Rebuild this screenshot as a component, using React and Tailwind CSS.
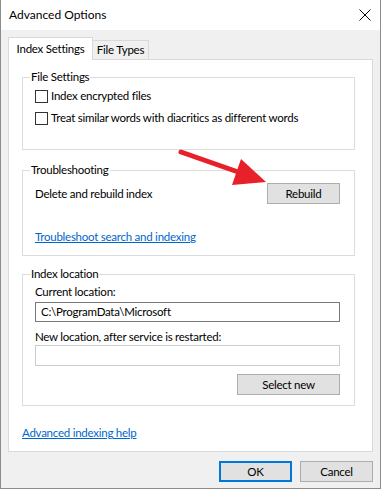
import React from "react";

const font = { fontFamily: 'Lato, "Noto Sans", sans-serif' };

function Btn({ children, className = "" }) {
  return (
    <div
      className={`flex h-[21px] items-center justify-center border border-[#adadad] bg-[#e1e1e1] text-black ${className}`}
    >
      {children}
    </div>
  );
}

function Check({ label }) {
  return (
    <div className="flex h-[22px] items-center">
      <div className="h-[13px] w-[13px] shrink-0 border border-[#333333] bg-white" />
      <span className="ml-[3px] whitespace-nowrap">{label}</span>
    </div>
  );
}

function Group({ title, className = "", children }) {
  return (
    <fieldset className={`border border-[#dcdcdc] pl-[7px] pr-[14px] ${className}`}>
      <legend className="px-[1px] leading-[16px]">{title}</legend>
      <div className="pl-[5px]">{children}</div>
    </fieldset>
  );
}

export default function App() {
  return (
    <div
      className="relative h-[489px] w-[381px] overflow-hidden border-b border-l border-r border-[#8c8c8c] bg-[#f0f0f0] text-[11.5px] leading-[16px] tracking-[-0.25px] text-black"
      style={font}
    >
      {/* Title bar */}
      <div className="flex h-[30px] items-center justify-between bg-white pl-[8px] pr-[8px]">
        <span className="text-[12px] tracking-normal">Advanced Options</span>
        <svg width="12" height="12" viewBox="0 0 12 12" className="mr-[1px]">
          <path d="M0.5 0.5 L11.5 11.5 M11.5 0.5 L0.5 11.5" stroke="#000" strokeWidth="1" />
        </svg>
      </div>

      {/* Tabs */}
      <div className="flex items-end pl-[7px] pt-[7px]">
        <div className="relative z-10 -mb-[1px] flex h-[23px] w-[85px] items-center justify-center border border-b-0 border-[#d9d9d9] bg-white">
          Index Settings
        </div>
        <div className="flex h-[19px] w-[56px] items-center justify-center border border-b-0 border-l-0 border-[#d9d9d9] bg-[#f0f0f0]">
          File Types
        </div>
      </div>

      {/* Panel */}
      <div className="mx-[7px] flex h-[393px] flex-col border border-[#d9d9d9] bg-white pl-[13px] pr-[17px]">
        <Group title="File Settings" className="mt-[9px] h-[81px]">
          <Check label="Index encrypted files" />
          <Check label="Treat similar words with diacritics as different words" />
        </Group>

        <Group title="Troubleshooting" className="mt-[12px] h-[94px]">
          <div className="mt-[5px] flex items-center justify-between">
            <span>Delete and rebuild index</span>
            <Btn className="w-[73px]">Rebuild</Btn>
          </div>
          <div className="mt-[25px]">
            <span className="text-[#0066cc] underline">Troubleshoot search and indexing</span>
          </div>
        </Group>

        <Group title="Index location" className="mt-[10px] h-[140px]">
          <div className="mt-[2px]">Current location:</div>
          <div className="mt-[2px] flex h-[20px] items-center border border-[#7a7a7a] bg-white pl-[5px]">
            C:\ProgramData\Microsoft
          </div>
          <div className="mt-[7px]">New location, after service is restarted:</div>
          <div className="h-[21px] border border-[#cccccc] bg-white" />
          <div className="mt-[8px] flex justify-end">
            <Btn className="w-[103px]">Select new</Btn>
          </div>
        </Group>

        <div className="mt-[19px]">
          <span className="text-[#0066cc] underline">Advanced indexing help</span>
        </div>
      </div>

      {/* Buttons */}
      <div className="mt-[9px] flex justify-end gap-[8px] pr-[7px]">
        <div className="flex h-[21px] w-[73px] items-center justify-center border-2 border-[#0078d7] bg-[#e1e1e1]">
          OK
        </div>
        <Btn className="w-[73px]">Cancel</Btn>
      </div>

      {/* Red annotation arrow */}
      <svg
        className="pointer-events-none absolute left-0 top-0"
        width="382"
        height="490"
        viewBox="0 0 382 490"
      >
        <line x1="180" y1="152" x2="240" y2="173" stroke="#e8202a" strokeWidth="5" strokeLinecap="round" />
        <polygon points="265,182 240,159 231,185" fill="#e8202a" />
      </svg>
    </div>
  );
}
